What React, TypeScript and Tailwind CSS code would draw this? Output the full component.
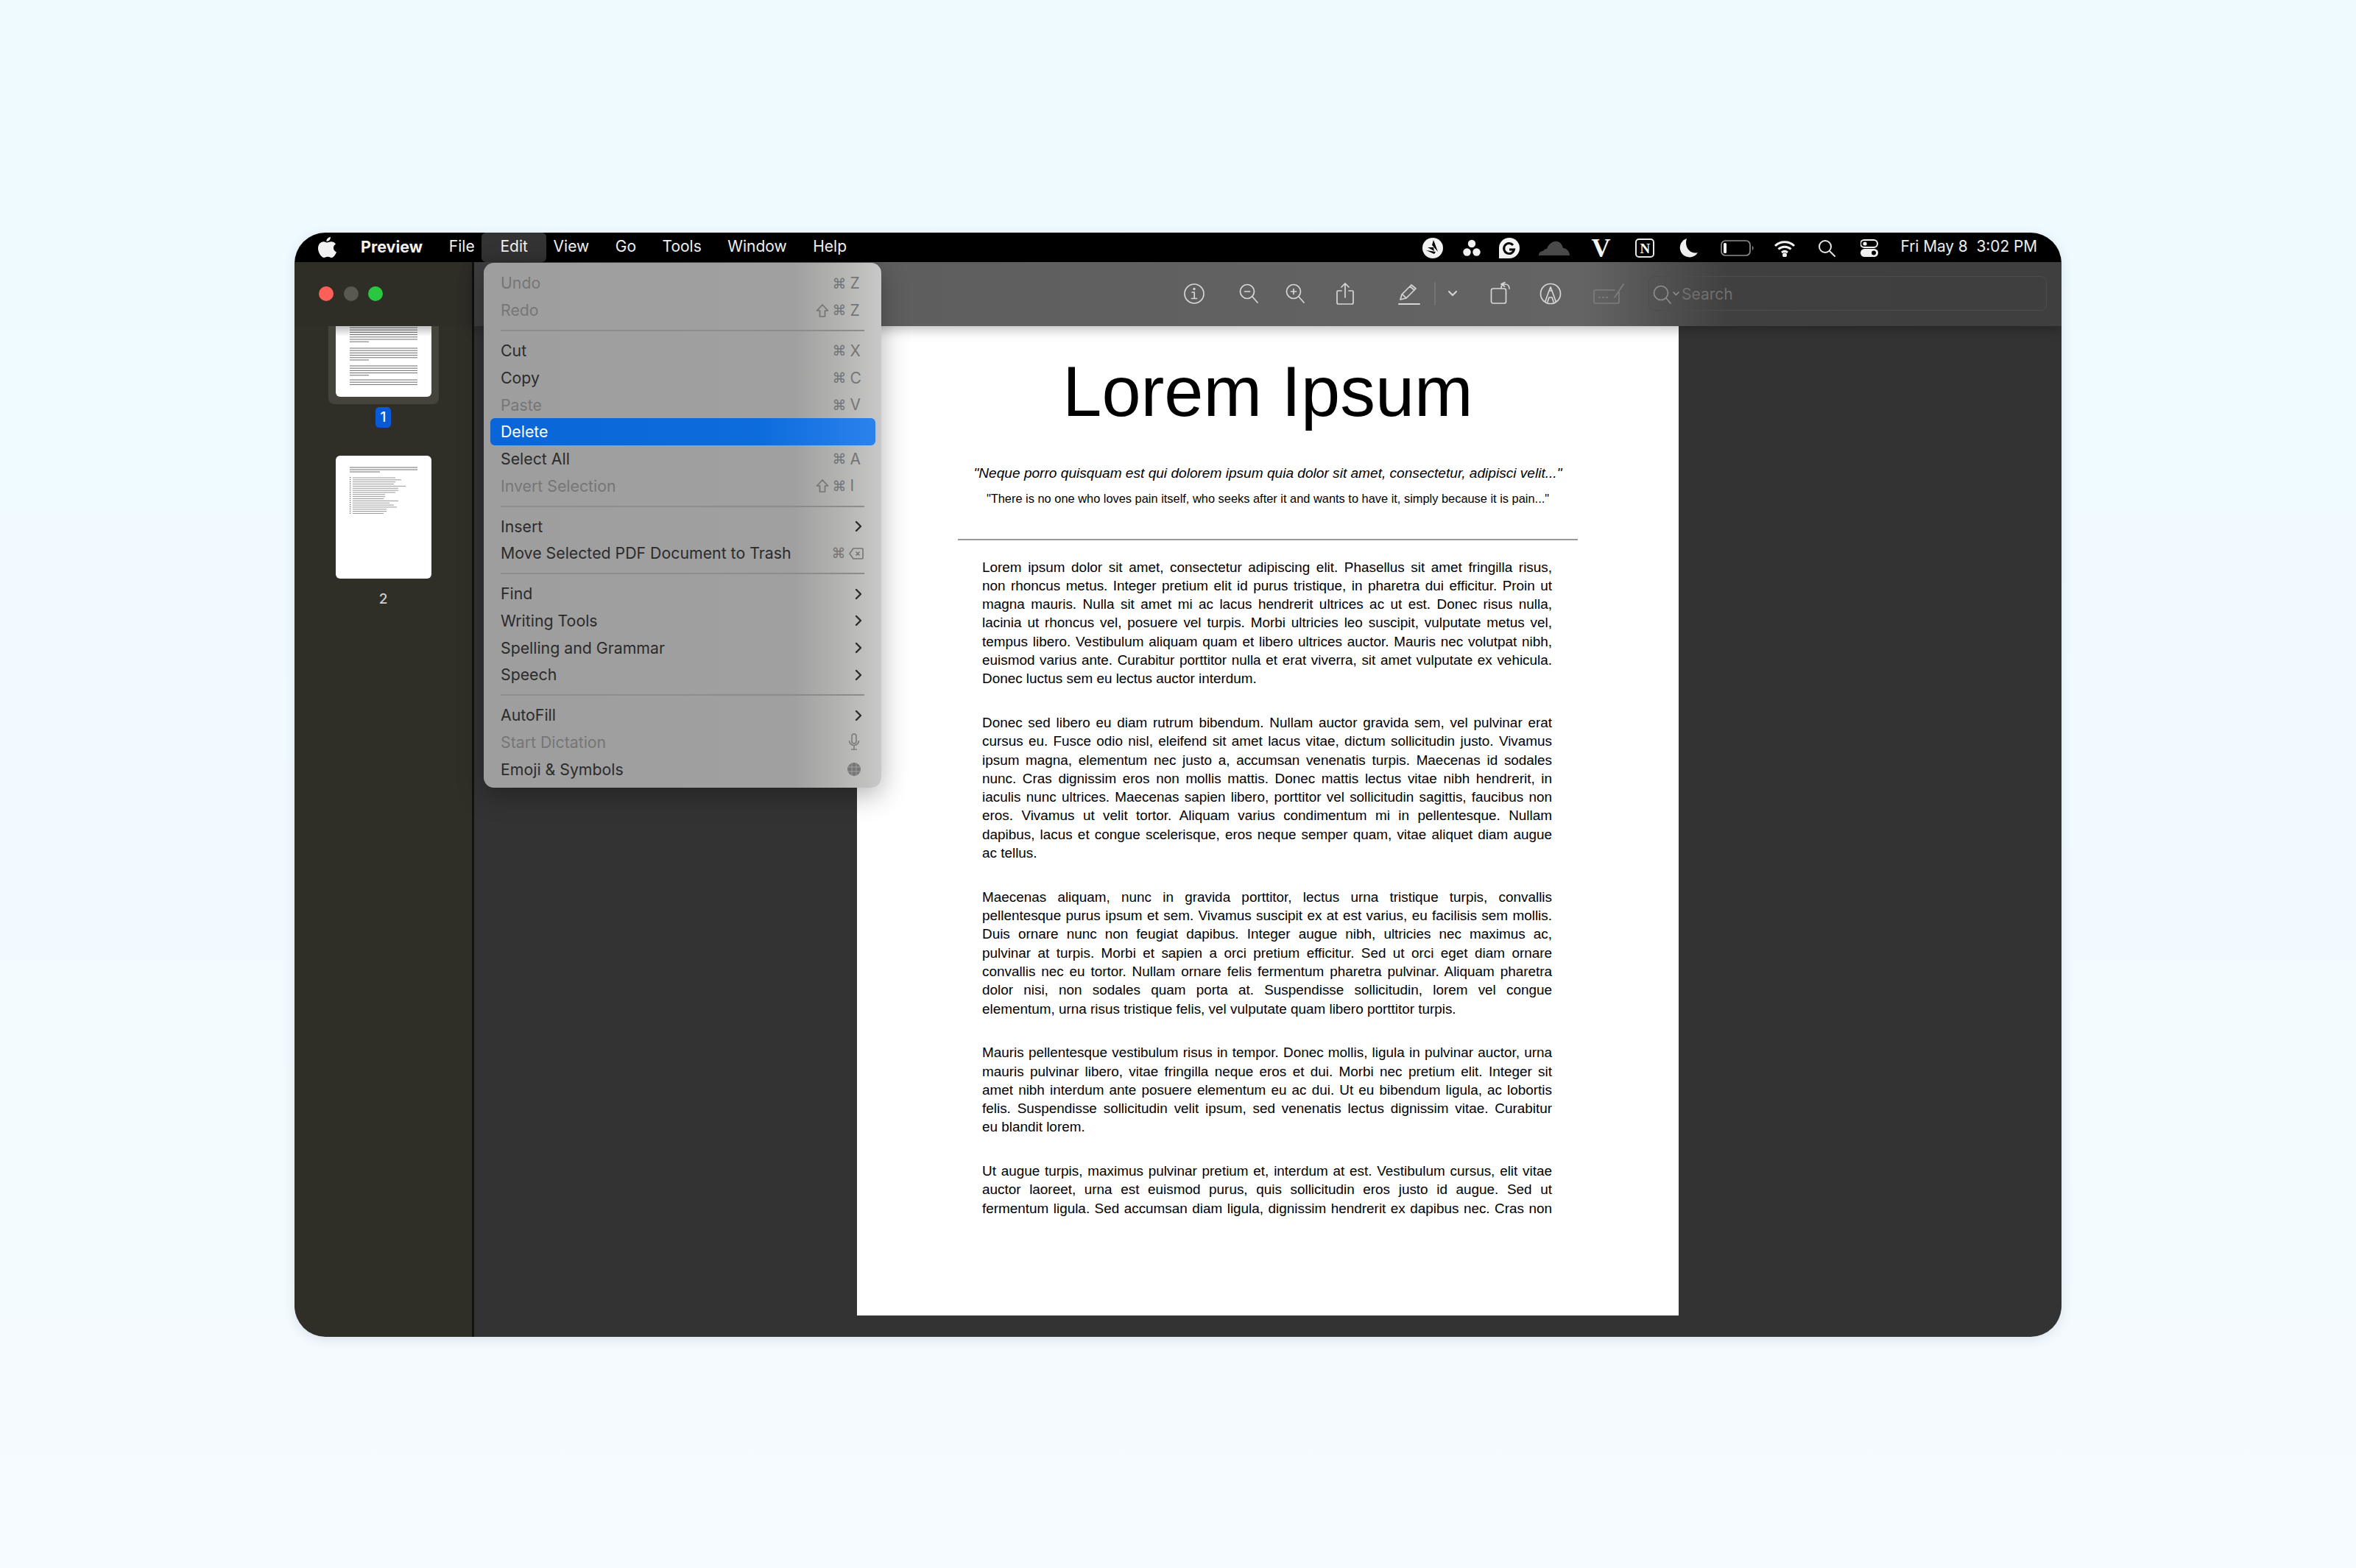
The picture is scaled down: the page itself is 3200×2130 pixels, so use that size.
import { ChevronRight } from "lucide-react";

type MenuRow =
  | { sep: true }
  | {
      sep?: false;
      label: string;
      off?: boolean;
      active?: boolean;
      shift?: boolean;
      letter?: string;
      sub?: boolean;
      icon?: "mic" | "globe";
    };

const menuRows: MenuRow[] = [
  { label: "Undo", off: true, letter: "Z" },
  { label: "Redo", off: true, shift: true, letter: "Z" },
  { sep: true },
  { label: "Cut", letter: "X" },
  { label: "Copy", letter: "C" },
  { label: "Paste", off: true, letter: "V" },
  { label: "Delete", active: true },
  { label: "Select All", letter: "A" },
  { label: "Invert Selection", off: true, shift: true, letter: "I" },
  { sep: true },
  { label: "Insert", sub: true },
  { label: "Move Selected PDF Document to Trash", letter: "del" },
  { sep: true },
  { label: "Find", sub: true },
  { label: "Writing Tools", sub: true },
  { label: "Spelling and Grammar", sub: true },
  { label: "Speech", sub: true },
  { sep: true },
  { label: "AutoFill", sub: true },
  { label: "Start Dictation", off: true, icon: "mic" },
  { label: "Emoji & Symbols", icon: "globe" },
];

const menuBar = ["File", "Edit", "View", "Go", "Tools", "Window", "Help"];

const paragraphs = [
  [
    "Lorem ipsum dolor sit amet, consectetur adipiscing elit. Phasellus sit amet fringilla risus,",
    "non rhoncus metus. Integer pretium elit id purus tristique, in pharetra dui efficitur. Proin ut",
    "magna mauris. Nulla sit amet mi ac lacus hendrerit ultrices ac ut est. Donec risus nulla,",
    "lacinia ut rhoncus vel, posuere vel turpis. Morbi ultricies leo suscipit, vulputate metus vel,",
    "tempus libero. Vestibulum aliquam quam et libero ultrices auctor. Mauris nec volutpat nibh,",
    "euismod varius ante. Curabitur porttitor nulla et erat viverra, sit amet vulputate ex vehicula.",
    "Donec luctus sem eu lectus auctor interdum.",
  ],
  [
    "Donec sed libero eu diam rutrum bibendum. Nullam auctor gravida sem, vel pulvinar erat",
    "cursus eu. Fusce odio nisl, eleifend sit amet lacus vitae, dictum sollicitudin justo. Vivamus",
    "ipsum magna, elementum nec justo a, accumsan venenatis turpis. Maecenas id sodales",
    "nunc. Cras dignissim eros non mollis mattis. Donec mattis lectus vitae nibh hendrerit, in",
    "iaculis nunc ultrices. Maecenas sapien libero, porttitor vel sollicitudin sagittis, faucibus non",
    "eros. Vivamus ut velit tortor. Aliquam varius condimentum mi in pellentesque. Nullam",
    "dapibus, lacus et congue scelerisque, eros neque semper quam, vitae aliquet diam augue",
    "ac tellus.",
  ],
  [
    "Maecenas aliquam, nunc in gravida porttitor, lectus urna tristique turpis, convallis",
    "pellentesque purus ipsum et sem. Vivamus suscipit ex at est varius, eu facilisis sem mollis.",
    "Duis ornare nunc non feugiat dapibus. Integer augue nibh, ultricies nec maximus ac,",
    "pulvinar at turpis. Morbi et sapien a orci pretium efficitur. Sed ut orci eget diam ornare",
    "convallis nec eu tortor. Nullam ornare felis fermentum pharetra pulvinar. Aliquam pharetra",
    "dolor nisi, non sodales quam porta at. Suspendisse sollicitudin, lorem vel congue",
    "elementum, urna risus tristique felis, vel vulputate quam libero porttitor turpis.",
  ],
  [
    "Mauris pellentesque vestibulum risus in tempor. Donec mollis, ligula in pulvinar auctor, urna",
    "mauris pulvinar libero, vitae fringilla neque eros et dui. Morbi nec pretium elit. Integer sit",
    "amet nibh interdum ante posuere elementum eu ac dui. Ut eu bibendum ligula, ac lobortis",
    "felis. Suspendisse sollicitudin velit ipsum, sed venenatis lectus dignissim vitae. Curabitur",
    "eu blandit lorem.",
  ],
  [
    "Ut augue turpis, maximus pulvinar pretium et, interdum at est. Vestibulum cursus, elit vitae",
    "auctor laoreet, urna est euismod purus, quis sollicitudin eros justo id augue. Sed ut",
    "fermentum ligula. Sed accumsan diam ligula, dignissim hendrerit ex dapibus nec. Cras non",
  ],
];

function Thumb1Lines() {
  const groups = [
    { y: 2, n: 7 },
    { y: 30, n: 6 },
    { y: 54, n: 5 },
    { y: 73, n: 3 },
  ];
  return (
    <svg width="130" height="96" className="block">
      {groups.map((g) =>
        Array.from({ length: g.n }).map((_, i) => (
          <line
            key={`${g.y}-${i}`}
            x1="19"
            x2={i === g.n - 1 && g.n !== 3 ? 45 : 111}
            y1={g.y + i * 3.2}
            y2={g.y + i * 3.2}
            stroke="#6e6e6e"
            strokeWidth="1"
          />
        )),
      )}
    </svg>
  );
}

function Thumb2Lines() {
  const widths = [58, 66, 58, 56, 72, 62, 62, 58, 44, 44, 42, 62, 50, 56, 60, 46, 46, 42];
  return (
    <svg width="130" height="167" className="block">
      {[16, 19, 22].map((y) => (
        <line key={y} x1="19" x2={y === 22 ? 60 : 111} y1={y} y2={y} stroke="#6e6e6e" strokeWidth="1" />
      ))}
      {widths.map((w, i) => (
        <g key={i}>
          <rect x="19" y={29 + i * 2.85} width="1.2" height="1.2" fill="#555" />
          <line x1="23" x2={23 + w} y1={30 + i * 2.85} y2={30 + i * 2.85} stroke="#8c8c8c" strokeWidth="0.9" />
        </g>
      ))}
    </svg>
  );
}

function Sidebar() {
  return (
    <div className="flex w-[241px] shrink-0 flex-col overflow-hidden bg-[#302f27]">
      <div className="flex h-[87px] shrink-0 items-center gap-[13.5px] bg-[#2e2d26] pb-[2px] pl-[33px]">
        <div className="size-[20px] rounded-full bg-[#fe5f57]" />
        <div className="size-[20px] rounded-full bg-[#59594f]" />
        <div className="size-[20px] rounded-full bg-[#2ac840]" />
      </div>
      <div className="flex flex-col items-center">
        <div className="flex h-[106px] w-[150px] justify-center rounded-b-[8px] bg-[#45443c]">
          <div className="relative h-[96px] w-[130px] overflow-hidden rounded-b-[6px] bg-white">
            <Thumb1Lines />
            <div className="absolute inset-x-0 top-0 h-[14px] bg-gradient-to-b from-black/25 to-transparent" />
          </div>
        </div>
        <div className="mt-[4px] flex h-[28px] w-[21px] items-center justify-center rounded-[5px] bg-[#0a59d6] text-[19px] font-medium text-white">
          1
        </div>
        <div className="mt-[38px] h-[167px] w-[130px] overflow-hidden rounded-[6px] bg-white">
          <Thumb2Lines />
        </div>
        <div className="mt-[14px] text-[19px] leading-[28px] font-medium text-[#cfcfcf]">2</div>
      </div>
    </div>
  );
}

function ToolIcon({ ml, w, children }: { ml: number; w: number; children: React.ReactNode }) {
  return (
    <svg
      width={w}
      height="32"
      viewBox={`0 0 ${w} 32`}
      fill="none"
      stroke="#d6d6d6"
      strokeWidth="1.7"
      strokeLinecap="round"
      strokeLinejoin="round"
      className="shrink-0"
      style={{ marginLeft: ml }}
    >
      {children}
    </svg>
  );
}

function Toolbar() {
  return (
    <div className="relative z-10 flex h-[87px] shrink-0 items-center bg-[linear-gradient(90deg,#3d3d3d_0%,#5e5e5e_26%,#646464_70%,#404040_79%,#3f3f3f_100%)] pb-[2px] shadow-[0_4px_16px_rgba(0,0,0,0.28)]">
      <ToolIcon ml={964} w={28}>
        <circle cx="14" cy="16" r="13" />
        <circle cx="14" cy="9.5" r="0.8" fill="#d6d6d6" />
        <path d="M11 14h3.2v8M10.5 22.5h7" />
      </ToolIcon>
      <ToolIcon ml={47} w={26}>
        <circle cx="11" cy="13" r="9.5" />
        <path d="M18 20l7 8M7.5 13h7" />
      </ToolIcon>
      <ToolIcon ml={37} w={26}>
        <circle cx="11" cy="13" r="9.5" />
        <path d="M18 20l7 8M7.5 13h7M11 9.5v7" />
      </ToolIcon>
      <ToolIcon ml={42} w={26}>
        <path d="M8 12H3.5a1.5 1.5 0 0 0-1.5 1.5V28a2 2 0 0 0 2 2h18a2 2 0 0 0 2-2V13.500a1.500 1.500 0 0 0-1.500-1.500H18M13 21V2M8 7l5-5 5 5" />
      </ToolIcon>
      <ToolIcon ml={59} w={30}>
        <path d="M3 24l2-7L18 4l6 5-13 13-8 2zM16 6l6 5M6 17l5 5" />
        <path d="M1 30h28" strokeWidth="2" />
      </ToolIcon>
      <div className="ml-[19px] h-[32px] w-[2px] shrink-0 bg-[#747474]" />
      <svg width="14" height="10" viewBox="0 0 14 10" fill="none" stroke="#d6d6d6" strokeWidth="2" strokeLinecap="round" className="ml-[16px] shrink-0">
        <path d="M2 2l5 5 5-5" />
      </svg>
      <ToolIcon ml={44} w={30}>
        <rect x="1.500" y="9" width="20" height="20" rx="2.500" />
        <path d="M15 8c0-3 2-5 5-5s6 2 6 6M15 3l5-2.500M15 3l4.500 3" />
      </ToolIcon>
      <ToolIcon ml={37} w={30}>
        <circle cx="15" cy="16" r="13.500" />
        <path d="M8 26l5-14 2-5 2 5 5 14M13 12h4M11 27l2-6h4l2 6" />
      </ToolIcon>
      <svg width="44" height="32" viewBox="0 0 44 32" fill="none" stroke="#7d7d7d" strokeWidth="1.7" strokeLinecap="round" strokeLinejoin="round" className="ml-[42px] shrink-0">
        <path d="M30 11H4a2 2 0 0 0-2 2v14a2 2 0 0 0 2 2h30a2 2 0 0 0 2-2V14M30 21L42 3" />
        <path d="M9 21h1M14 21h1M19 21h1" strokeWidth="2.200" />
      </svg>
      <div className="ml-[32px] flex h-[47px] w-[541px] shrink-0 items-center rounded-[8px] border border-[#4d4d4d] pt-[2px] pl-[4px]">
        <svg width="40" height="28" viewBox="0 0 40 28" fill="none" stroke="#8c8c8c" strokeWidth="1.700" strokeLinecap="round" className="shrink-0">
          <circle cx="12" cy="12" r="9.500" />
          <path d="M19 19l6 7M29 11l3.500 3.500L36 11" />
        </svg>
        <span className="text-[21px] text-[#6f6f6f]">Search</span>
      </div>
    </div>
  );
}

function StatusBar() {
  return (
    <div className="ml-auto flex items-center pt-[2px] text-white">
      <svg width="28" height="28" viewBox="0 0 28 28" className="ml-0">
        <circle cx="14" cy="14" r="14" fill="#f2f2f2" />
        <path d="M15 3l6 16-8-9zM5 17l13 2-2 3zM7 13l9 5-1-5z" fill="#000" />
      </svg>
      <svg width="24" height="24" viewBox="0 0 24 24" fill="#f2f2f2" className="ml-[27px]">
        <circle cx="12" cy="6" r="5.200" />
        <circle cx="5.500" cy="17.500" r="5.200" />
        <circle cx="18.500" cy="17.500" r="5.200" />
      </svg>
      <svg width="28" height="28" viewBox="0 0 28 28" className="ml-[25px]">
        <path d="M14 0a14 14 0 0 1 0 28H0V14A14 14 0 0 1 14 0z" fill="#f4f4f4" />
        <path d="M19 10a7 7 0 1 0 1.500 6H14" fill="none" stroke="#000" strokeWidth="3" />
      </svg>
      <svg width="42" height="20" viewBox="0 0 42 20" fill="#4a4a4a" className="ml-[26px]">
        <path d="M0 20c0-4 3-6 6-6 1-2 3-3 5-3 2-6 8-11 14-10 5 1 7 5 8 9 4 0 9 4 9 10z" />
      </svg>
      <span className="ml-[29px] w-[24px] text-center font-['Liberation_Serif',serif] text-[36px] leading-[32px] font-bold text-[#f5f5f5]">V</span>
      <div className="ml-[36px] flex size-[26px] items-center justify-center rounded-[5px] border-2 border-[#e8e8e8] font-['Liberation_Serif',serif] text-[19px] leading-none font-bold text-white">
        N
      </div>
      <svg width="26" height="28" viewBox="0 0 26 28" fill="#f0f0f0" className="ml-[34px]">
        <path d="M10 1a13 13 0 1 0 15 19C15 23 6 13 10 1z" />
      </svg>
      <svg width="46" height="22" viewBox="0 0 46 22" fill="none" className="ml-[30px]">
        <rect x="1" y="1" width="39" height="20" rx="5.500" stroke="#8e8e8e" strokeWidth="1.700" />
        <rect x="4" y="4" width="4" height="14" rx="1.500" fill="#f2f2f2" />
        <path d="M43 8c2 1 2 5 0 6z" fill="#8e8e8e" />
      </svg>
      <svg width="30" height="24" viewBox="0 0 30 24" fill="none" stroke="#f2f2f2" strokeWidth="3" className="ml-[26px]">
        <path d="M2 9c7-7 19-7 26 0M6.500 13.500c5-4.500 12-4.500 17 0M11 18c2.500-2 5.500-2 8 0" />
        <circle cx="15" cy="21.500" r="1.500" fill="#f2f2f2" />
      </svg>
      <svg width="24" height="24" viewBox="0 0 24 24" fill="none" stroke="#e6e6e6" strokeWidth="2" strokeLinecap="round" className="ml-[30px]">
        <circle cx="10" cy="10" r="8" />
        <path d="M16 16l7 7" />
      </svg>
      <svg width="24" height="24" viewBox="0 0 24 24" className="ml-[34px]">
        <rect x="0" y="1" width="23" height="10" rx="5" fill="none" stroke="#f2f2f2" strokeWidth="2" />
        <circle cx="6" cy="6" r="2.600" fill="#f2f2f2" />
        <rect x="0" y="13" width="24" height="11" rx="5.500" fill="#f2f2f2" />
        <circle cx="18" cy="18.500" r="3" fill="#000" />
      </svg>
      <span className="mr-[33px] ml-[30px] -translate-y-[2px] text-[20.800px] whitespace-pre text-[#ececec]">Fri May 8  3:02 PM</span>
    </div>
  );
}

function TopBar() {
  return (
    <div className="flex h-[40px] shrink-0 items-center bg-black pl-[30px] text-[21px] text-[#f2f2f2]">
      <svg width="28" height="30" viewBox="0 0 28 30" fill="#f2f2f2" className="shrink-0">
        <path d="M19 1c.3 3-2.500 6-5.500 6C13 4 16 1.200 19 1zM14 8.500c1.600 0 3-1.300 6-1.300 2 0 4.500 1 6 3.200-4.500 2.800-3.800 9 1 11-1.200 3.200-4 7.600-6.800 7.600-2 0-2.500-1.200-5-1.200s-3.200 1.200-5 1.200C6.500 29 2 22 2 16.500 2 11 5.500 7.300 9.500 7.300c2 0 3.300 1.200 4.500 1.200z" />
      </svg>
      <span className="ml-[32px] pb-[2px] text-[21.500px] font-bold">Preview</span>
      <div className="ml-[18px] flex items-center pb-[2px]">
        {menuBar.map((item) =>
          item === "Edit" ? (
            <span key={item} className="-mx-[8px] -mb-[2px] flex h-[40px] items-center rounded-[6px] bg-[#333] px-[25px] pb-[2px]">
              {item}
            </span>
          ) : (
            <span key={item} className="px-[17.750px]">
              {item}
            </span>
          ),
        )}
      </div>
      <StatusBar />
    </div>
  );
}

function EditMenu() {
  return (
    <div className="absolute top-[41px] left-[257px] z-20 h-[713px] w-[540px] rounded-[14px] bg-[linear-gradient(90deg,#9e9e9e_0%,#a0a0a0_78%,#b4b4b2_90%,#c8c8c8_100%)] pt-[9.600px] shadow-[0_10px_36px_rgba(0,0,0,0.3)]">
      {menuRows.map((row, i) => {
        if (row.sep) {
          return (
            <div key={i} className="flex h-[18.300px] items-center px-[23px]">
              <div className="h-[2px] w-full bg-[#8c8c8c]" />
            </div>
          );
        }
        const tone = row.active ? "text-white" : row.off ? "text-[#767676]" : "text-[#2b2b2b]";
        return (
          <div key={row.label} className="h-[36.700px] px-[8.500px]">
            <div
              className={`flex h-full items-center rounded-[6px] pr-[18px] pl-[14.500px] ${tone} ${
                row.active ? "bg-[linear-gradient(90deg,#0a66d8_0%,#0d6cdc_70%,#2b82ec_100%)]" : ""
              }`}
            >
              <span className="pt-[1px] text-[21.300px]">{row.label}</span>
              {row.letter && (
                <span className="ml-auto flex items-center text-[#757575]">
                  {row.shift && (
                    <svg width="18" height="20" viewBox="0 0 18 20" fill="none" stroke="#757575" strokeWidth="1.700" strokeLinejoin="round" className="mr-[5px]">
                      <path d="M9 2l7.500 8H12.500v8h-7v-8H1.500z" />
                    </svg>
                  )}
                  <span className="font-['DejaVu_Sans',sans-serif] text-[19px]">⌘</span>
                  {row.letter === "del" ? (
                    <svg width="20" height="20" viewBox="0 0 20 20" fill="none" stroke="#757575" strokeWidth="1.600" strokeLinejoin="round" className="mr-[-2px] ml-[4px]">
                      <path d="M6 3h12a1 1 0 0 1 1 1v12a1 1 0 0 1-1 1H6l-5-7zM9.500 7.500l5 5M14.500 7.500l-5 5" />
                    </svg>
                  ) : (
                    <span className="ml-[5px] w-[16px] text-[21px]">{row.letter}</span>
                  )}
                </span>
              )}
              {row.sub && <ChevronRight size={24} strokeWidth={2.400} className="mr-[-7px] ml-auto text-[#2b2b2b]" />}
              {row.icon === "mic" && (
                <svg width="16" height="24" viewBox="0 0 16 24" fill="none" stroke="#7b7b7b" strokeWidth="1.600" className="mr-[3px] ml-auto">
                  <rect x="5" y="1" width="6" height="13" rx="3" />
                  <path d="M1.500 10a6.500 6.500 0 0 0 13 0M8 17v4M4 22h8" />
                </svg>
              )}
              {row.icon === "globe" && (
                <svg width="20" height="20" viewBox="0 0 20 20" fill="#757575" stroke="#a0a0a0" strokeWidth="1" className="mr-[1px] ml-auto">
                  <circle cx="10" cy="10" r="9" stroke="none" />
                  <path d="M1 7h18M1 13h18M7 1v18M13 1v18" fill="none" />
                </svg>
              )}
            </div>
          </div>
        );
      })}
    </div>
  );
}

function PdfPage() {
  return (
    <div className="relative mx-auto h-[1344px] w-[1116px] overflow-hidden bg-white pt-[42px] font-['Liberation_Sans',Arial,sans-serif] text-black">
      <h1 className="text-center text-[95.500px] leading-none">Lorem Ipsum</h1>
      <p className="mt-[47px] text-center text-[19.100px] leading-[30px] italic">
        "Neque porro quisquam est qui dolorem ipsum quia dolor sit amet, consectetur, adipisci velit..."
      </p>
      <p className="mt-[7px] text-center text-[16.400px] leading-[24px]">
        "There is no one who loves pain itself, who seeks after it and wants to have it, simply because it is pain..."
      </p>
      <div className="mx-[137px] mt-[43px] h-[2px] bg-[#999]" />
      <div className="mt-[24px] flex flex-col gap-[34.400px] pr-[172px] pl-[170px] text-[18.900px] leading-[25.300px]">
        {paragraphs.map((lines, p) => (
          <div key={p}>
            {lines.map((line, i) => (
              <div
                key={i}
                className={
                  i === lines.length - 1 && p !== paragraphs.length - 1
                    ? "whitespace-nowrap"
                    : "text-justify [text-align-last:justify]"
                }
              >
                {line}
              </div>
            ))}
          </div>
        ))}
      </div>
    </div>
  );
}

export default function App() {
  return (
    <div className="flex min-h-screen justify-center bg-[linear-gradient(180deg,#eefaff_0%,#f5fbff_100%)] pt-[316px] font-['Inter','Liberation_Sans',sans-serif]">
      <div className="relative flex h-[1500px] w-[2400px] flex-col overflow-hidden rounded-[42px] shadow-[0_4px_16px_rgba(40,60,90,0.12)]">
        <TopBar />
        <div className="flex min-h-0 flex-1">
          <Sidebar />
          <div className="w-[3px] shrink-0 bg-[#121212]" />
          <div className="flex min-w-0 flex-1 flex-col bg-[#333]">
            <Toolbar />
            <div className="min-h-0 flex-1">
              <PdfPage />
            </div>
          </div>
        </div>
        <EditMenu />
      </div>
    </div>
  );
}
